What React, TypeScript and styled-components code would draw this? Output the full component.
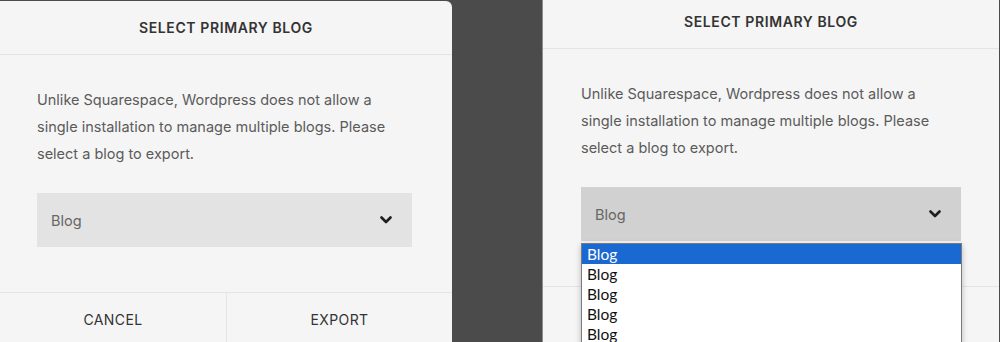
import styled, { createGlobalStyle } from 'styled-components';

const GlobalStyle = createGlobalStyle`
    html, body {
        margin: 0;
        padding: 0;
        background: #4b4b4b;
        overflow: hidden;
    }
    #root {
        width: 1000px;
        height: 342px;
    }
`;

interface PanelProps {
    $shift?: number;
    $side: 'left' | 'right';
    $selectBg: string;
    $open?: boolean;
}

const Chevron = () => (
    <svg width="12" height="8" viewBox="0 0 12 8" fill="none">
        <polyline
            points="1.5,1.5 6,6 10.5,1.5"
            stroke="#1e1e1e"
            strokeWidth="2.6"
            strokeLinecap="round"
            strokeLinejoin="round"
        />
    </svg>
);

const options = ['Blog', 'Blog', 'Blog', 'Blog', 'Blog'];

const Dialog = ({ $shift, $side, $selectBg, $open }: PanelProps) => {
    return (
        <Panel $side={$side} $shift={$shift}>
            <Header>Select Primary Blog</Header>
            <Body $side={$side}>
                <Text>
                    Unlike Squarespace, Wordpress does not allow a single installation to manage
                    multiple blogs. Please select a blog to export.
                </Text>
                <SelectWrap>
                    <SelectBox $bg={$selectBg}>
                        <span>Blog</span>
                        <Chevron />
                    </SelectBox>
                    {$open && (
                        <OptionList>
                            {options.map((o, i) => (
                                <Option key={i} $active={i === 0}>
                                    {o}
                                </Option>
                            ))}
                        </OptionList>
                    )}
                </SelectWrap>
            </Body>
            <Footer>
                <FooterButton>Cancel</FooterButton>
                <FooterButton>Export</FooterButton>
            </Footer>
        </Panel>
    );
};

const App = () => {
    return (
        <>
            <GlobalStyle />
            <Screen>
                <Dialog $side="left" $selectBg="#e3e3e3" />
                <Gap />
                <Dialog $side="right" $selectBg="#d1d1d1" $shift={-5} $open />
            </Screen>
        </>
    );
};

const Screen = styled.div`
    display: flex;
    width: 1000px;
    height: 342px;
    overflow: hidden;
    background: #4b4b4b;
    font-family: Inter, 'Noto Sans', sans-serif;
`;

const Gap = styled.div`
    width: 90px;
    flex-shrink: 0;
`;

const Panel = styled.div<{ $side: 'left' | 'right'; $shift?: number }>`
    display: flex;
    flex-direction: column;
    flex-shrink: 0;
    width: ${(p) => (p.$side === 'left' ? '452px' : '456px')};
    height: 400px;
    margin-top: ${(p) => (p.$side === 'left' ? 1 : p.$shift ?? 0)}px;
    background: #f5f5f5;
    border-top-right-radius: ${(p) => (p.$side === 'left' ? '6px' : '0')};
    border-left: ${(p) => (p.$side === 'right' ? '1px solid #8d8d8d' : 'none')};
`;

const Header = styled.div`
    height: 53px;
    display: flex;
    align-items: center;
    justify-content: center;
    border-bottom: 1px solid #e4e4e4;
    font-size: 14px;
    font-weight: 600;
    letter-spacing: 0.6px;
    text-transform: uppercase;
    color: #333;
`;

const Body = styled.div<{ $side: 'left' | 'right' }>`
    padding: ${(p) => (p.$side === 'left' ? '31px 40px 45px 37px' : '31px 38px 45px 38px')};
    display: flex;
    flex-direction: column;
    gap: 26px;
`;

const Text = styled.p`
    margin: 0;
    max-width: 362px;
    font-size: 14.5px;
    line-height: 27px;
    color: #5b5b5b;
`;

const SelectWrap = styled.div`
    position: relative;
`;

const SelectBox = styled.div<{ $bg: string }>`
    height: 54px;
    display: flex;
    align-items: center;
    justify-content: space-between;
    padding: 0 20px 0 14px;
    background: ${(p) => p.$bg};
    font-size: 14.5px;
    color: #666;
`;

const OptionList = styled.div`
    position: absolute;
    top: 56px;
    left: 0;
    right: -1px;
    background: #fff;
    border: 1px solid #7a7a7a;
    box-shadow: 0 2px 6px rgba(0, 0, 0, 0.25);
    font-family: Lato, 'Noto Sans', sans-serif;
    z-index: 2;
`;

const Option = styled.div<{ $active?: boolean }>`
    height: 20px;
    line-height: 20px;
    padding-left: 5px;
    font-size: 15.5px;
    background: ${(p) => (p.$active ? '#1a68d2' : '#fff')};
    color: ${(p) => (p.$active ? '#fff' : '#111')};
`;

const Footer = styled.div`
    display: grid;
    grid-template-columns: 1fr 1fr;
    border-top: 1px solid #e4e4e4;
`;

const FooterButton = styled.div`
    height: 53px;
    display: flex;
    align-items: center;
    justify-content: center;
    font-size: 14px;
    letter-spacing: 0.4px;
    text-transform: uppercase;
    color: #333;

    & + & {
        border-left: 1px solid #e4e4e4;
    }
`;

export default App;
